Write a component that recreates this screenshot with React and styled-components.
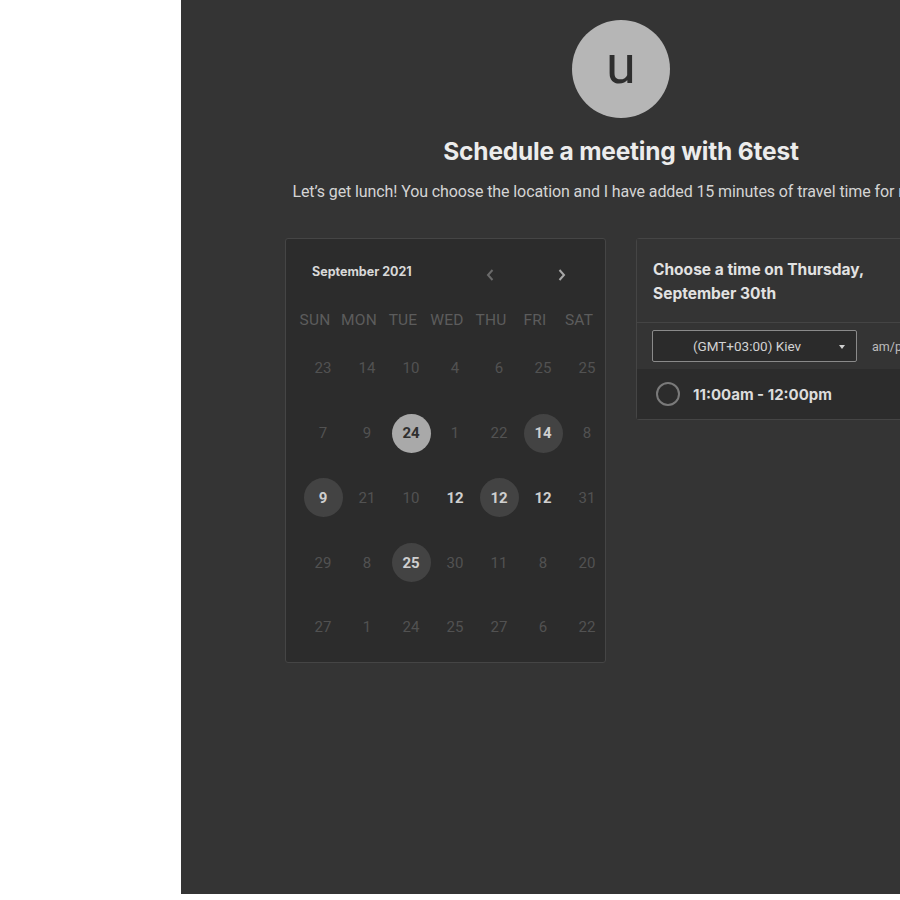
import React from "react";
import styled, { createGlobalStyle } from "styled-components";

const GlobalStyle = createGlobalStyle`
  html, body {
    margin: 0;
    padding: 0;
    background: #ffffff;
    overflow: hidden;
  }
  body {
    font-family: Roboto, "Liberation Sans", sans-serif;
  }
`;

const Page = styled.div`
  width: 900px;
  height: 900px;
  overflow: hidden;
  display: flex;
`;

const Panel = styled.div`
  flex: 0 0 880px;
  margin-left: 181px;
  height: 894px;
  background: #343434;
  display: flex;
  flex-direction: column;
  align-items: center;
  padding-top: 20px;
  box-sizing: border-box;
`;

const Avatar = styled.div`
  width: 98px;
  height: 98px;
  border-radius: 50%;
  background: #b6b6b6;
  color: #2e2e2e;
  display: flex;
  align-items: center;
  justify-content: center;
  font-family: Roboto, sans-serif;
  font-size: 54px;
  line-height: 1;
  padding-bottom: 8px;
  box-sizing: border-box;
`;

const Title = styled.h1`
  margin: 17px 0 0;
  font-family: Inter, Roboto, sans-serif;
  font-size: 24.5px;
  font-weight: 700;
  color: #ececec;
  letter-spacing: -0.2px;
  line-height: 32px;
`;

const Subtitle = styled.p`
  margin: 15px 0 0;
  font-size: 16px;
  color: #d4d4d4;
  white-space: nowrap;
  line-height: 20px;
  letter-spacing: -0.1px;
`;

const Columns = styled.div`
  display: flex;
  gap: 30px;
  margin-top: 36px;
  align-items: flex-start;
`;

const Card = styled.div`
  width: 321px;
  box-sizing: border-box;
  border: 1px solid #454545;
  border-radius: 3px;
  background: ${(p) => p.bg || "#2c2c2c"};
`;

const CalHead = styled.div`
  display: flex;
  align-items: center;
  height: 64px;
  padding: 0 0 0 26px;
`;

const Month = styled.div`
  font-family: Inter, Roboto, sans-serif;
  font-size: 12.5px;
  font-weight: 700;
  color: #d8d8d8;
  width: 163px;
`;

const Arrow = styled.button`
  width: 30px;
  height: 30px;
  border: none;
  background: transparent;
  padding: 0;
  display: flex;
  align-items: center;
  justify-content: center;
  margin-top: 8px;
  margin-right: ${(p) => p.gap || 0}px;
  color: ${(p) => p.color};
`;

const HeaderRow = styled.div`
  display: grid;
  grid-template-columns: repeat(7, 44px);
  padding: 0 0 0 7px;
  margin-top: 2px;
  margin-bottom: 1px;
`;

const DayName = styled.div`
  height: 30px;
  display: flex;
  align-items: center;
  justify-content: center;
  font-size: 15.5px;
  color: #5c5c5c;
  letter-spacing: 0.2px;
`;

const Grid = styled.div`
  display: grid;
  grid-template-columns: repeat(7, 44px);
  grid-auto-rows: 64.75px;
  padding: 0 0 2px 15px;
`;

const Cell = styled.div`
  display: flex;
  align-items: center;
  justify-content: center;
`;

const Day = styled.span`
  width: 39px;
  height: 39px;
  border-radius: 50%;
  display: flex;
  align-items: center;
  justify-content: center;
  font-size: 15px;
  font-weight: ${(p) => (p.kind === "faded" ? 400 : 700)};
  color: ${(p) =>
    p.kind === "selected" ? "#2f2f2f" : p.kind === "faded" ? "#525252" : "#cfcfcf"};
  background: ${(p) =>
    p.kind === "selected" ? "#a9a9a9" : p.kind === "avail" ? "#434343" : "transparent"};
`;

const TimeHead = styled.div`
  padding: 19px 16px 16px;
  font-family: Inter, Roboto, sans-serif;
  font-size: 15.5px;
  font-weight: 700;
  line-height: 24px;
  color: #e2e2e2;
  border-bottom: 1px solid #444;
  background: #343434;
`;

const ZoneRow = styled.div`
  display: flex;
  align-items: center;
  padding: 7px 15px;
  gap: 15px;
  background: #343434;
`;

const Select = styled.div`
  width: 205px;
  height: 32px;
  box-sizing: border-box;
  border: 1px solid #8a8a8a;
  border-radius: 2px;
  background: #2b2b2b;
  position: relative;
  display: flex;
  align-items: center;
  justify-content: center;
  padding-right: 25px;
  padding-left: 10px;
  font-size: 13.5px;
  color: #d2d2d2;
`;

const Caret = styled.span`
  position: absolute;
  right: 11px;
  top: 14px;
  width: 0;
  height: 0;
  border-left: 3.5px solid transparent;
  border-right: 3.5px solid transparent;
  border-top: 4px solid #d0d0d0;
`;

const AmPm = styled.span`
  font-size: 12.5px;
  color: #bdbdbd;
`;

const SlotRow = styled.div`
  display: flex;
  align-items: center;
  height: 50px;
  padding: 0 19px;
  gap: 13px;
  background: #2c2c2c;
`;

const Radio = styled.span`
  width: 20px;
  height: 20px;
  border-radius: 50%;
  border: 2px solid #7a7a7a;
`;

const SlotText = styled.span`
  font-family: Inter, Roboto, sans-serif;
  font-size: 15px;
  font-weight: 700;
  color: #dcdcdc;
`;

const weeks = [
  [["23"], ["14"], ["10"], ["4"], ["6"], ["25"], ["25"]],
  [["7"], ["9"], ["24", "selected"], ["1"], ["22"], ["14", "avail"], ["8"]],
  [["9", "avail"], ["21"], ["10"], ["12", "bold"], ["12", "avail"], ["12", "bold"], ["31"]],
  [["29"], ["8"], ["25", "avail"], ["30"], ["11"], ["8"], ["20"]],
  [["27"], ["1"], ["24"], ["25"], ["27"], ["6"], ["22"]],
];

const dayNames = ["SUN", "MON", "TUE", "WED", "THU", "FRI", "SAT"];

const Chevron = ({ dir }) => (
  <svg width="10" height="14" viewBox="0 0 10 14" fill="none">
    <path
      d={dir === "left" ? "M7.5 2 L3 7 L7.5 12" : "M2.5 2 L7 7 L2.5 12"}
      stroke="currentColor"
      strokeWidth="2"
    />
  </svg>
);

const App = () => {
  return (
    <Page>
      <GlobalStyle />
      <Panel>
        <Avatar>u</Avatar>
        <Title>Schedule a meeting with 6test</Title>
        <Subtitle>
          Let’s get lunch! You choose the location and I have added 15 minutes of
          travel time for myself.
        </Subtitle>
        <Columns>
          <Card>
            <CalHead>
              <Month>September 2021</Month>
              <Arrow color="#6a6a6a" gap={42}>
                <Chevron dir="left" />
              </Arrow>
              <Arrow color="#a8a8a8">
                <Chevron dir="right" />
              </Arrow>
            </CalHead>
            <HeaderRow>
              {dayNames.map((d) => (
                <DayName key={d}>{d}</DayName>
              ))}
            </HeaderRow>
            <Grid>
              {weeks.flat().map(([n, kind], i) => (
                <Cell key={i}>
                  <Day kind={kind || "faded"}>{n}</Day>
                </Cell>
              ))}
            </Grid>
          </Card>
          <Card bg="#2c2c2c">
            <TimeHead>
              Choose a time on Thursday,
              <br />
              September 30th
            </TimeHead>
            <ZoneRow>
              <Select>
                (GMT+03:00) Kiev
                <Caret />
              </Select>
              <AmPm>am/pm</AmPm>
            </ZoneRow>
            <SlotRow>
              <Radio />
              <SlotText>11:00am - 12:00pm</SlotText>
            </SlotRow>
          </Card>
        </Columns>
      </Panel>
    </Page>
  );
};

export default App;
